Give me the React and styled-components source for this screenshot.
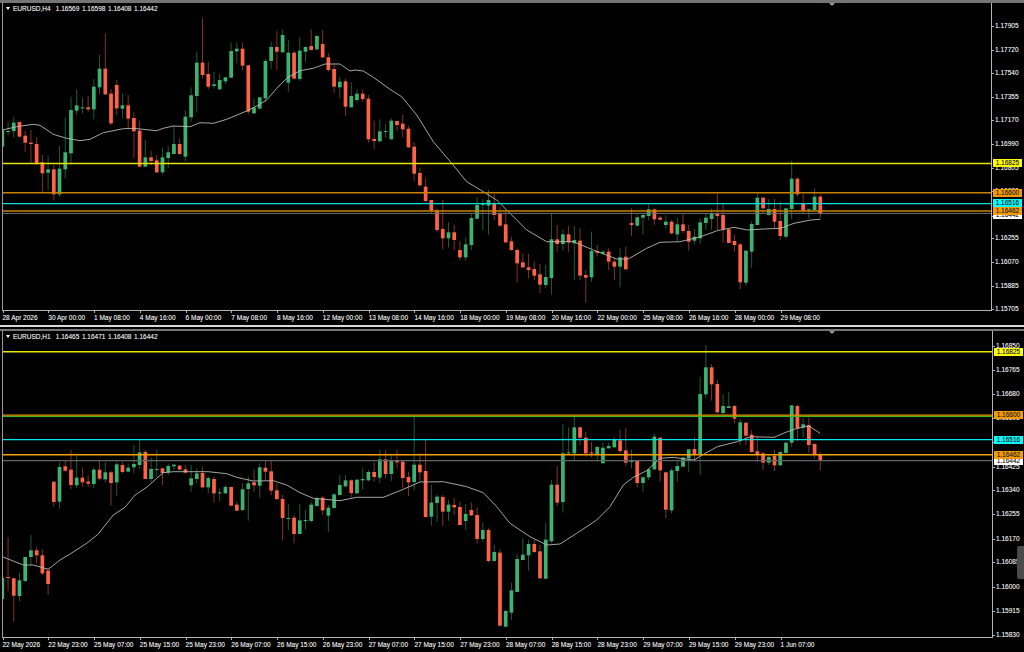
import React from 'react'
import styled, { createGlobalStyle } from 'styled-components'

const GlobalStyle = createGlobalStyle`
  html, body {
    margin: 0;
    padding: 0;
    background: #000;
    overflow: hidden;
  }
`

// candle rows are [high, bodyTop, bodyBottom, low, isUp], measured at 3x page pixels
const h4Candles = [
  [365,390,440,475,1],[365,393,396,405,1],[350,368,393,412,1],[365,366,410,412,0],[392,407,428,455,0],[390,428,432,490,0],
  [412,432,490,495,0],[465,487,520,578,0],[468,508,518,570,1],[495,508,583,602,0],[438,506,583,590,1],[352,457,508,535,1],
  [290,330,460,495,1],[268,316,332,345,1],[292,322,325,340,1],[288,322,328,335,0],[237,260,328,358,1],[165,206,262,282,1],
  [100,206,283,285,0],[268,281,370,375,0],[240,255,325,345,0],[280,316,326,355,1],[285,316,356,385,0],[337,354,394,475,0],
  [362,392,500,502,0],[420,472,500,500,1],[452,472,483,495,0],[465,481,517,518,0],[443,472,517,522,1],[438,457,474,505,1],
  [378,432,462,462,1],[415,432,462,465,0],[332,350,470,483,1],[262,286,352,365,1],[157,188,288,336,1],[54,188,225,235,0],
  [185,222,260,268,0],[215,253,258,265,1],[222,240,268,270,1],[230,232,244,252,1],[128,153,233,235,1],[128,146,154,190,1],
  [128,146,197,212,0],[195,196,335,343,0],[295,323,340,342,1],[292,292,326,328,1],[175,183,295,305,1],[125,141,183,207,1],
  [93,141,155,210,0],[88,105,157,158,1],[120,158,248,275,1],[152,158,236,238,0],[112,152,237,243,1],[140,141,155,185,1],
  [88,138,150,152,0],[105,108,148,152,1],[90,132,172,175,0],[160,172,210,215,0],[190,207,260,278,0],[230,245,262,295,1],
  [236,244,320,347,0],[247,288,322,322,1],[268,281,300,308,1],[268,281,297,306,0],[285,296,418,428,0],[362,417,423,447,0],
  [358,394,424,425,1],[373,393,396,413,1],[355,362,418,418,1],[362,363,375,393,0],[345,371,388,412,0],[378,386,442,444,0],
  [427,440,521,542,0],[502,519,556,560,0],[534,560,603,607,0],[600,600,632,640,0],[625,632,690,698,0],[600,687,715,748,0],
  [667,697,715,742,1],[675,697,720,750,0],[723,750,772,780,0],[712,733,772,782,1],[640,654,735,750,1],[592,615,656,660,1],
  [597,612,615,690,1],[570,600,617,705,1],[582,610,645,660,0],[620,640,677,680,0],[635,673,727,730,0],[710,724,750,752,0],
  [745,750,790,847,0],[760,787,802,805,0],[762,802,810,835,0],[785,807,827,840,0],[792,823,854,880,0],[795,831,855,865,1],
  [640,718,834,884,1],[675,718,732,755,0],[690,703,732,750,1],[678,703,727,755,0],[678,720,730,840,1],[685,722,827,840,0],
  [810,825,833,907,0],[695,753,832,845,1],[735,753,758,770,0],[752,755,760,765,1],[745,755,785,810,0],[775,785,800,840,0],
  [745,772,800,862,1],[740,770,808,810,0],[625,669,675,708,0],[643,652,677,680,1],[640,645,653,703,1],[613,628,648,660,1],
  [625,628,658,675,0],[648,653,659,662,0],[645,665,675,688,1],[660,665,700,703,0],[653,673,703,725,1],[640,673,693,700,0],
  [675,693,725,752,0],[687,710,722,733,1],[655,667,715,732,1],[640,653,669,690,1],[625,640,657,690,1],[580,642,648,690,0],
  [612,645,688,728,0],[685,688,729,730,0],[705,723,735,755,0],[730,733,847,868,0],[750,752,848,858,1],[665,672,755,803,1],
  [580,593,675,675,1],[592,593,625,640,0],[597,627,645,647,1],[597,627,665,685,0],[605,663,708,720,0],[625,625,710,715,1],
  [482,536,627,658,1],[532,536,583,590,0],[582,612,632,643,0],[625,628,632,655,1],[565,590,630,632,1],[583,590,640,655,0],
]

const shift = (rows, dy) => rows.map(([a, b, c, d, up]) => [a + dy, b + dy, c + dy, d + dy, up])

const h1Candles = [
  ...shift([
    [415,443,507,525,1],[322,441,443,483,0],[443,445,497,575,0],[428,451,498,513,1],[380,381,453,455,1],[315,361,381,405,1],
    [350,361,376,400,0],[358,376,430,435,0],[415,422,462,495,0],[155,155,216,230,0],[97,111,215,236,1],[90,109,122,125,0],
    [60,119,165,177,0],[78,143,166,174,1],[112,143,157,170,0],[135,155,161,170,0],[112,119,162,175,1],[92,119,146,152,0],
    [97,127,148,158,1],[122,127,159,227,0],[98,103,157,197,1],[95,105,126,130,0],[100,113,125,125,1],[45,102,112,130,1],
    [30,67,105,117,1],[60,66,147,147,0],[82,117,147,155,1],[60,117,120,140,1],[113,115,129,165,0],[100,108,127,135,1],
    [102,104,109,122,1],[105,107,119,120,0],[105,118,128,130,0],[105,145,166,185,1],[115,130,147,160,1],[110,129,172,175,0],
    [138,144,172,190,1],[140,147,190,218,0],[175,187,190,212,1],[165,171,190,192,1],[170,171,227,229,0],[215,224,242,244,0],
    [160,178,240,243,1],[140,160,177,272,1],[118,157,166,185,0],[100,112,167,203,1],[92,113,125,150,0],[92,124,182,195,0],
    [160,181,207,210,0],[195,207,264,332,0],[222,264,266,300,1],[255,263,312,340,0],[222,271,312,312,1],[240,270,272,298,1],
    [215,224,273,278,1],[200,205,228,230,1],[198,203,241,255,0],[225,233,257,305,1],[190,193,234,235,1],[135,165,195,195,1],
  ], 1290),
  ...shift([
    [225,241,259,262,1],[238,241,279,292,0],[238,239,280,281,1],[205,237,241,270,1],[210,216,241,243,1],[187,216,231,245,0],
    [148,178,233,250,1],[150,178,222,235,0],[165,182,222,243,1],[150,182,187,205,0],[183,185,234,265,0],[215,231,247,288,0],
    [48,194,246,272,1],[160,194,217,245,0],[120,213,351,353,0],[255,308,350,377,1],[285,290,309,365,1],[285,291,335,378,0],
    [300,314,335,362,1],[293,315,322,345,0],[305,321,375,375,0],[313,342,363,390,1],[308,330,346,348,0],[322,345,417,430,0],
    [367,390,417,425,1],[383,390,483,487,0],[435,456,483,485,1],[448,458,677,678,0],[630,633,680,682,1],[548,571,638,660,1],
    [463,477,576,578,1],[415,464,480,480,1],[420,432,466,512,1],[420,432,456,458,0],[435,454,535,536,0],[370,419,536,537,1],
    [240,254,424,430,1],[198,254,308,318,0],[72,160,306,338,1],[82,157,160,165,1],[50,82,160,180,1],[80,82,113,135,0],
    [95,113,160,170,0],[126,157,160,172,0],[138,141,162,185,1],[128,143,190,190,1],[128,138,145,145,1],[112,118,142,143,1],
    [90,121,153,160,0],[85,151,188,198,0],[148,182,186,205,1],[183,183,249,262,0],[228,232,249,275,1],[205,208,232,240,1],
    [102,110,208,210,1],[112,113,211,245,0],[215,217,329,355,0],[205,211,331,340,1],[183,198,213,245,1],
  ], 1200),
  ...shift([
    [380,383,410,412,1],[358,358,385,425,1],[322,357,375,395,0],[140,192,375,435,1],[45,112,193,205,1],[102,112,163,212,0],
    [150,162,247,250,0],[192,228,249,262,1],[185,229,234,235,1],[225,228,266,280,0],[268,277,332,345,1],[277,278,317,345,0],
    [300,314,366,368,0],[320,364,373,395,0],[365,370,398,420,0],[375,381,398,405,1],[360,377,406,423,0],[362,366,406,408,1],
    [335,338,369,370,1],[225,226,338,350,1],[223,228,295,335,0],[263,283,292,323,1],[262,285,345,368,0],[340,342,373,385,0],
    [367,374,393,422,0],
  ], 990),
]

const offsetPoints = (pts, dx, dy) => pts.map(([x, y]) => [x + dx, y + dy])

const h4Average = [
  [7,390],[50,380],[100,373],[120,376],[160,403],[200,415],[240,422],[270,418],[310,398],[370,386],[400,385],[470,392],[490,385],
  [520,378],[570,380],[600,368],[640,370],[680,358],[740,333],[770,318],[800,300],[830,265],[860,235],[900,212],[940,205],[975,192],[1020,192],
  ...offsetPoints([[30,213],[45,210],[70,213],[100,232],[150,268],[185,290],[230,345],[280,425],[335,490],[380,545],[430,575],[470,600]], 1020, 0),
  ...offsetPoints([[500,90],[560,150],[620,185],[700,185],[760,210],[830,237],[865,237],[920,205],[960,187],[1020,185]], 1020, 540),
  ...offsetPoints([[50,170],[100,152],[150,142],[190,150],[240,147],[290,145],[330,130],[380,120],[409,118]], 2052, 540),
]

const h1Average = [
  ...offsetPoints([[7,380],[70,405],[100,405],[145,418],[180,390],[210,372],[260,340],[295,312],[340,255],[375,232],[405,195],[440,172],
    [470,145],[490,128],[520,125],[625,125],[680,131],[710,142],[760,153],[820,152],[860,165],[900,188],[940,205],[1020,212]], 0, 1290),
  ...offsetPoints([[50,292],[130,292],[190,268],[240,246],[310,245],[380,260],[430,278],[470,320],[510,370],[570,410],[620,435],[660,432],
    [710,400],[770,360],[810,320],[850,255],[880,232],[920,212],[960,175],[1000,172],[1020,175]], 1020, 1200),
  ...offsetPoints([[30,390],[60,372],[100,350],[160,335],[200,320],[270,322],[310,305],[340,295],[375,288],[408,310]], 2052, 990),
]

const h4Levels = [
  { y: 163.5, color: '#e4e400', width: 1.5 },
  { y: 192.7, color: '#c98200', width: 1.6 },
  { y: 203.6, color: '#00e0e0', width: 1.4 },
  { y: 213.4, color: '#6e6e6e', width: 1 },
  { y: 211, color: '#c98200', width: 1.5 },
]

const h1Levels = [
  { y: 351.7, color: '#e8e800', width: 1.5 },
  { y: 416.3, color: '#3cb820', width: 1.2 },
  { y: 415.2, color: '#e09400', width: 1.2 },
  { y: 439.7, color: '#00e4e4', width: 1.3 },
  { y: 460.7, color: '#5e666c', width: 1.2 },
  { y: 454.7, color: '#f59e00', width: 1.4 },
]

const h4Prices = [
  ['1.17905', 25.8], ['1.17720', 49.5], ['1.17540', 72.8], ['1.17355', 96.5], ['1.17170', 119.8], ['1.16990', 143.8], ['1.16805', 167.8],
  ['1.16620', 191], ['1.16440', 215.5], ['1.16255', 238.2], ['1.16070', 261.5], ['1.15885', 285.5], ['1.15705', 308.8],
]

const h1Prices = [
  ['1.16850', 345.5], ['1.16765', 369.8], ['1.16680', 393.8], ['1.16595', 417.5], ['1.16510', 442], ['1.16425', 466.5], ['1.16340', 489.8],
  ['1.16255', 514.2], ['1.16170', 538.5], ['1.16085', 562.2], ['1.16000', 586.5], ['1.15915', 610.8], ['1.15830', 634.8],
]

const h4Tags = [
  ['1.16442', 215, '#ffffff'], ['1.16825', 163.4, '#ffff00'], ['1.16600', 192.7, '#f59a00'], ['1.16516', 203.4, '#00ffff'], ['1.16462', 211, '#f59a00'],
]

const h1Tags = [
  ['1.16442', 461, '#ffffff'], ['1.16825', 351.7, '#ffff00'], ['1.16600', 415, '#f59a00'], ['1.16516', 439.5, '#00ffff'], ['1.16462', 454.5, '#f59a00'],
]

const h4Dates = ['28 Apr 2026','30 Apr 00:00','1 May 08:00','4 May 16:00','6 May 00:00','7 May 08:00','8 May 16:00','12 May 00:00','13 May 08:00',
  '14 May 16:00','18 May 00:00','19 May 08:00','20 May 16:00','22 May 00:00','25 May 08:00','26 May 16:00','28 May 00:00','29 May 08:00']

const h1Dates = ['22 May 2026','22 May 23:00','25 May 07:00','25 May 15:00','25 May 23:00','26 May 07:00','26 May 15:00','26 May 23:00','27 May 07:00',
  '27 May 15:00','27 May 23:00','28 May 07:00','28 May 15:00','28 May 23:00','29 May 07:00','29 May 15:00','29 May 23:00','1 Jun 07:00']

const Terminal = styled.div`
  width: 1024px;
  height: 652px;
  background: #000;
  display: flex;
  flex-direction: column;
  font-family: "Liberation Sans", Arial, sans-serif;
  font-size: 6.5px;
  color: #e2e2e2;
  text-shadow: 0 0 0.6px rgba(226, 226, 226, 0.7);
`

const ChartWindow = styled.section`
  position: relative;
  box-sizing: border-box;
  height: ${p => p.$height}px;
  padding-left: 2px;
  border-top: ${p => p.$edge}px solid #757575;
  display: grid;
  grid-template-columns: ${p => p.$plotWidth}px minmax(0, 1fr);
  grid-template-rows: ${p => p.$plotHeight}px minmax(0, 1fr);
`

const WindowGap = styled.div`
  box-sizing: border-box;
  height: 4px;
  border-top: 2px solid #d9d9d9;
`

const PlotFrame = styled.div`
  position: relative;
  grid-column: 1;
  grid-row: 1;
  min-width: 0;
  border-left: 1px solid #9a9a9a;
  border-right: 1px solid #b4b4b4;
  border-bottom: 1px solid #b4b4b4;
  overflow: hidden;
`

const PlotCanvas = styled.svg`
  display: block;
`

const ChartTitle = styled.div`
  position: absolute;
  left: 3px;
  top: ${p => p.$top}px;
  display: flex;
  align-items: center;
  gap: 3px;
  word-spacing: 0.8px;
  white-space: pre;
`

const TitleCaret = styled.span`
  width: 0;
  height: 0;
  border-left: 2.5px solid transparent;
  border-right: 2.5px solid transparent;
  border-top: 3px solid #fff;
`

const ShiftMarker = styled.span`
  position: absolute;
  left: 826px;
  top: 0;
  width: 0;
  height: 0;
  border-left: 3px solid transparent;
  border-right: 3px solid transparent;
  border-top: 3px solid #8d9eae;
`

const PriceAxis = styled.div`
  position: relative;
  grid-column: 2;
  grid-row: 1 / span 2;
`

const PriceLabel = styled.span`
  position: absolute;
  left: 3px;
  transform: translateY(-50%);
  line-height: 8px;

  &::before {
    content: '';
    position: absolute;
    left: -3px;
    top: 4px;
    width: 2px;
    height: 1px;
    background: #b4b4b4;
  }
`

const PriceTag = styled.span`
  position: absolute;
  left: 0.7px;
  width: 29.5px;
  height: 8px;
  transform: translateY(-50%);
  background: ${p => p.$color};
  color: #2a2a2a;
  text-shadow: 0 0 0.6px rgba(42, 42, 42, 0.6);
  line-height: 8px;
  text-align: center;
`

const DateAxis = styled.div`
  grid-column: 1;
  grid-row: 2;
  display: flex;
  padding-left: 0.5px;
  padding-top: 3px;
`

const DateLabel = styled.span`
  position: relative;
  flex: 0 0 45.77px;
  line-height: 8px;
  white-space: nowrap;

  &::before {
    content: '';
    position: absolute;
    left: 0;
    top: -3px;
    width: 1px;
    height: 2px;
    background: #b4b4b4;
  }
`

const ScrollHandle = styled.div`
  position: absolute;
  right: 0;
  top: 215px;
  width: 7px;
  height: 33px;
  background: #4a4a4a;
  border-radius: 2px 0 0 2px;
`

const candleX = i => 2.33 + 5.72 * i

function Candle({ row, index }) {
  const [high, top, bottom, low, up] = row
  const x = candleX(index)
  const color = up ? '#3cb371' : '#ff6347'
  return (
    <g>
      <line x1={x} x2={x} y1={high / 3} y2={low / 3} stroke={color} strokeWidth={0.8} opacity={0.65} />
      <rect x={x - 1.85} y={top / 3} width={3.7} height={Math.max((bottom - top) / 3, 1)} fill={color} />
    </g>
  )
}

function Chart({ symbol, candles, average, levels, originY, width, height }) {
  const averagePath = average.map(([x, y]) => `${(x / 3).toFixed(1)},${(y / 3).toFixed(1)}`).join(' ')
  return (
    <PlotFrame>
      <PlotCanvas width={width} height={height} viewBox={`3 ${originY} ${width} ${height}`}>
        {candles.map((row, i) => <Candle key={i} row={row} index={i} />)}
        <polyline points={averagePath} fill="none" stroke="#b8b8b8" strokeWidth={0.9} />
        {levels.map(l => (
          <line key={l.y} x1={3} x2={3 + width} y1={l.y} y2={l.y} stroke={l.color} strokeWidth={l.width} />
        ))}
      </PlotCanvas>
      <ChartTitle $top={2}>
        <TitleCaret />
        <span>{symbol}</span>
      </ChartTitle>
      <ShiftMarker />
    </PlotFrame>
  )
}

function Axis({ prices, tags, originY }) {
  return (
    <PriceAxis>
      {prices.map(([text, y]) => (
        <PriceLabel key={text} style={{ top: y - originY }}>{text}</PriceLabel>
      ))}
      {tags.map(([text, y, color]) => (
        <PriceTag key={text} $color={color} style={{ top: y - originY }}>{text}</PriceTag>
      ))}
    </PriceAxis>
  )
}

function Dates({ items }) {
  return (
    <DateAxis>
      {items.map(d => <DateLabel key={d}>{d}</DateLabel>)}
    </DateAxis>
  )
}

export default function App() {
  return (
    <Terminal>
      <GlobalStyle />
      <ChartWindow $height={325} $edge={3} $plotWidth={990} $plotHeight={308}>
        <Chart
          symbol="EURUSD,H4  1.16569 1.16598 1.16408 1.16442"
          candles={h4Candles}
          average={h4Average}
          levels={h4Levels}
          originY={3}
          width={988}
          height={307}
        />
        <Axis prices={h4Prices} tags={h4Tags} originY={3} />
        <Dates items={h4Dates} />
      </ChartWindow>
      <WindowGap />
      <ChartWindow $height={323} $edge={2} $plotWidth={991} $plotHeight={307}>
        <Chart
          symbol="EURUSD,H1  1.16465 1.16471 1.16408 1.16442"
          candles={h1Candles}
          average={h1Average}
          levels={h1Levels}
          originY={331}
          width={989}
          height={306}
        />
        <Axis prices={h1Prices} tags={h1Tags} originY={331} />
        <Dates items={h1Dates} />
        <ScrollHandle />
      </ChartWindow>
    </Terminal>
  )
}
